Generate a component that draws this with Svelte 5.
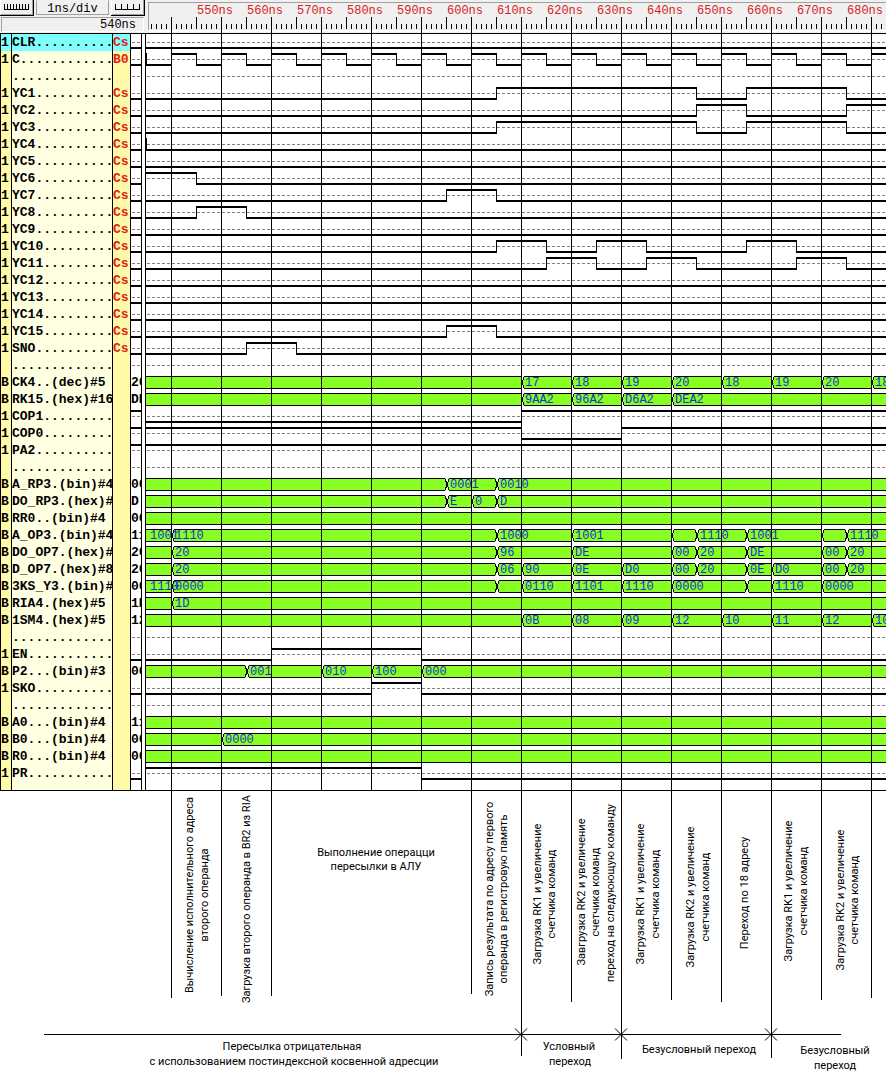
<script>
  const ROW = 17;
  const END = 4000;
  const START = 146;

  const bit = (name, type, first, edges = [], side = 0) => ({ kind: 'bit', name, type, first, edges, side });
  const bus = (name, side, cells = []) => ({ kind: 'bus', name, side, cells });
  const gap = () => ({ kind: 'gap', name: '' });

  const clock = Array.from({ length: 154 }, (_, i) => 171 + i * 25);

  const rows = [
    bit('CLR', 'Cs', 0),
    bit('C', 'B0', 0, clock),
    gap(),
    bit('YC1', 'Cs', 0, [496, 696, 746, 846]),
    bit('YC2', 'Cs', 0, [696, 746, 846]),
    bit('YC3', 'Cs', 0, [496, 696, 746, 846]),
    bit('YC4', 'Cs', 0),
    bit('YC5', 'Cs', 0),
    bit('YC6', 'Cs', 1, [196]),
    bit('YC7', 'Cs', 0, [446, 496]),
    bit('YC8', 'Cs', 0, [196, 246]),
    bit('YC9', 'Cs', 0),
    bit('YC10', 'Cs', 0, [496, 546, 596, 646, 746, 796]),
    bit('YC11', 'Cs', 0, [546, 596, 646, 696, 796, 846]),
    bit('YC12', 'Cs', 0),
    bit('YC13', 'Cs', 0),
    bit('YC14', 'Cs', 0),
    bit('YC15', 'Cs', 0, [446, 496]),
    bit('SNO', 'Cs', 0, [246, 296]),
    gap(),
    bus('CK4..(dec)#5', '20', [[521, '17'], [571, '18'], [621, '19'], [671, '20'], [721, '18'], [771, '19'], [821, '20'], [871, '18']]),
    bus('RK15.(hex)#16', 'DE', [[521, '9AA2'], [571, '96A2'], [621, 'D6A2'], [671, 'DEA2']]),
    bit('COP1', '', 0, [521], 1),
    bit('COP0', '', 1, [521, 621], 1),
    bit('PA2', '', 1, [], 1),
    gap(),
    bus('A_RP3.(bin)#4', '00', [[446, '0001'], [496, '0010']]),
    bus('DO_RP3.(hex)#', 'D', [[446, 'E'], [471, '0'], [496, 'D']]),
    bus('RR0..(bin)#4', '00'),
    bus('A_OP3.(bin)#4', '11', [[146, '1001'], [171, '1110'], [496, '1000'], [571, '1001'], [671, ''], [696, '1110'], [746, '1001'], [821, ''], [846, '1110']]),
    bus('DO_OP7.(hex)#', '20', [[171, '20'], [496, '96'], [571, 'DE'], [671, '00'], [696, '20'], [746, 'DE'], [821, '00'], [846, '20']]),
    bus('D_OP7.(hex)#8', '20', [[171, '20'], [496, '06'], [521, '90'], [571, '0E'], [621, 'D0'], [671, '00'], [696, '20'], [746, '0E'], [771, 'D0'], [821, '00'], [846, '20']]),
    bus('3KS_Y3.(bin)#', '00', [[146, '1110'], [171, '0000'], [496, ''], [521, '0110'], [571, '1101'], [621, '1110'], [671, '0000'], [746, ''], [771, '1110'], [821, '0000']]),
    bus('RIA4.(hex)#5', '1D', [[171, '1D']]),
    bus('1SM4.(hex)#5', '12', [[521, '0B'], [571, '08'], [621, '09'], [671, '12'], [721, '10'], [771, '11'], [821, '12'], [871, '10']]),
    gap(),
    bit('EN', '', 0, [271, 421]),
    bus('P2...(bin)#3', '00', [[246, '001'], [321, '010'], [371, '100'], [421, '000']]),
    bit('SKO', '', 0, [371, 421]),
    gap(),
    bus('A0...(bin)#4', '11'),
    bus('B0...(bin)#4', '00', [[221, '0000']]),
    bus('R0...(bin)#4', '00'),
    bit('PR', '', 1, [421])
  ];

  const label = (row) => (row.kind === 'bus' ? row.name : row.name.padEnd(13, '.'));

  // Horizontal runs of a one-bit signal: [from, to, level]
  function runs(row) {
    const xs = [START, ...row.edges, END];
    return xs.slice(1).map((x, i) => [xs[i], x + 1, (row.first + i) % 2]);
  }

  const grid = Array.from({ length: 77 }, (_, i) => 171 + i * 50);
  const minor = Array.from({ length: 700 }, (_, i) => 151 + i * 5);
  const times = Array.from({ length: 14 }, (_, i) => ({ x: 197 + i * 50, t: 550 + i * 10 }));

  const drops = [[171, 208], [221, 206], [271, 206], [471, 204], [521, 266], [571, 212], [621, 269], [671, 210], [721, 212], [771, 268], [821, 210], [871, 208]];
  const marks = [521, 621, 771];

  const vertical = [
    [193, 105, 'Вычисление исполнительного адреса'],
    [208, 105, 'второго операнда'],
    [250, 109, 'Загрузка второго операнда в BR2 из RIA'],
    [493, 109, 'Запись результата по адресу первого'],
    [507, 109, 'операнда в регистровую память'],
    [541, 104, 'Загрузка RK1 и увеличение'],
    [555, 104, 'счетчика команд'],
    [585, 102, 'Завгрузка RK2 и увеличение'],
    [599, 102, 'счетчика команд'],
    [614, 103, 'переход на следуюющую команду'],
    [644, 104, 'Загрузка RK1 и увеличение'],
    [659, 104, 'счетчика команд'],
    [694, 107, 'Загрузка RK2 и увеличение'],
    [709, 107, 'счетчика команд'],
    [748, 103, 'Переход по 18 адресу'],
    [792, 101, 'Загрузка RK1 и увеличение'],
    [807, 101, 'счетчика команд'],
    [844, 110, 'Загрузка RK2 и увеличение'],
    [858, 110, 'счетчика команд']
  ];

  const horizontal = [
    [376, 66, 'Выполнение операцци'],
    [376, 80, 'пересылки в АЛУ'],
    [292, 260, 'Пересылка отрицательная'],
    [294, 275, 'с использованием постиндексной косвенной адресции'],
    [569, 260, 'Условный'],
    [570, 275, 'переход'],
    [699, 263, 'Безусловный переход'],
    [835, 264, 'Безусловный'],
    [835, 279, 'переход']
  ];
</script>

<main>
  <header>
    <div class="controls">
      <div class="scale">
        <button aria-label="Finer scale">
          <svg width="27" height="8"><path d="M0 5h25v1H0zM0 0h1v6H0zM3 0h1v6H3zM6 0h1v6H6zM9 0h1v6H9zM12 0h1v6h-1zM15 0h1v6h-1zM18 0h1v6h-1zM21 0h1v6h-1zM24 0h1v6h-1z" /></svg>
        </button>
        <output>1ns/div</output>
        <button aria-label="Coarser scale">
          <svg width="27" height="8"><path d="M0 5h25v1H0zM0 0h1v6H0zM6 0h1v6H6zM12 0h1v6h-1zM18 0h1v6h-1zM24 0h1v6h-1z" /></svg>
        </button>
      </div>
      <output class="cursor">540ns</output>
    </div>
    <svg class="ruler" height="33">
      <g transform="translate(-146 0)">
        <rect class="edge" x="148" y="2" width="4000" height="1" />
        <rect class="edge" x="148" y="2" width="1" height="29" />
        <rect class="light" x="148" y="30" width="4000" height="2" />
        {#each minor as x}
          <rect {x} y="24" width="1" height="5" />
        {/each}
        {#each grid as x}
          <rect {x} y="17" width="1" height="16" />
          <rect x={x + 25} y="17" width="1" height="12" />
        {/each}
        {#each times as { x, t }}
          <text {x} y="14">{t}ns</text>
        {/each}
      </g>
    </svg>
  </header>

  <section class="body">
    <div class="names">
      {#each rows as row, i}
        <div class="row" class:active={i === 0}>
          <span class="kind">{row.kind === 'bit' ? '1' : row.kind === 'bus' ? 'B' : ''}</span>
          <span class="name">{label(row)}</span>
          <span class="type">{row.type ?? ''}</span>
          <span class="side">
            {#if row.kind === 'bus'}
              {row.side}
            {:else}
              <svg width="10" height="17">
                <path class="dash" d="M1 8.500h9" />
                {#if row.kind === 'bit'}
                  <rect y={row.side ? 2 : 13} width="10" height="2" />
                {/if}
              </svg>
            {/if}
          </span>
          <span class="split"></span>
        </div>
      {/each}
      <div class="row rest">
        <span class="kind"></span><span class="name"></span><span class="type"></span><span class="side"></span><span class="split"></span>
      </div>
    </div>

    <svg class="waves" height={rows.length * ROW + 8}>
      <g transform="translate(-146 0)">
        {#each rows as row, i}
          <g transform="translate(0 {i * ROW})">
            {#if row.kind === 'bus'}
              <rect class="bus" x="146" y="2" width="4000" height="13" />
              <rect x="146" y="2" width="4000" height="1" />
              <rect x="146" y="14" width="4000" height="1" />
            {:else}
              <path class="dash" d="M147 8.500H4000" />
            {/if}
            {#if row.kind === 'bit'}
              {#each runs(row) as [from, to, level]}
                <rect x={from} y={level ? 2 : 13} width={to - from} height="2" />
              {/each}
              {#each row.edges as x}
                <rect {x} y="2" width="1" height="13" />
              {/each}
              {#if row.name === 'C' || row.name === 'YC4'}
                <rect x="146" y="2" width="1" height="13" />
              {/if}
            {/if}
          </g>
        {/each}
        {#each grid as x}
          <rect {x} y="0" width="1" height="756" />
        {/each}
        {#each rows as row, i}
          {#if row.kind === 'bus'}
            <g transform="translate(0 {i * ROW})">
              {#each row.cells as [x, value]}
                {#if x > START}
                  <g transform="translate({x} 0)">
                    <path class="notch" d="M{(x - 171) % 50 ? -1 : 1} 2H3L2 8H1zM{(x - 171) % 50 ? -1 : 1} 15H3L2 9H1z" />
                    {#if (x - 171) % 50}
                      <path d="M-1 3h1v3h-1zM0 5h1v7H0zM-1 11h1v3h-1z" />
                    {/if}
                    <path d="M2 3h1v3H2zM1 6h1v5H1zM2 11h1v3H2z" />
                  </g>
                {/if}
                <text x={x + 4} y="12">{value}</text>
              {/each}
            </g>
          {/if}
        {/each}
      </g>
    </svg>
  </section>

  <svg class="notes" height="299">
    {#each drops as [x, h]}
      <rect {x} y="0" width="1" height={h - 1} />
    {/each}
    <rect x="44" y="243" width="797" height="1" />
    {#each marks as x}
      <path class="cross" d="M{x - 6} 237.500l12 12m0 -12l-12 12" />
    {/each}
    {#each vertical as [x, y, text]}
      <text transform="translate({x} {y - 1}) rotate(-90)">{text}</text>
    {/each}
    {#each horizontal as [x, y, text]}
      <text {x} y={y - 1}>{text}</text>
    {/each}
  </svg>
</main>

<style>
  :global(body) {
    margin: 0;
    background: #fff;
  }

  main {
    overflow: hidden;
    color: #000;
    font-family: 'Liberation Mono', monospace;
    font-size: 13px;
  }

  svg {
    display: block;
  }

  header,
  .body {
    display: grid;
    grid-template-columns: 146px minmax(0, 1fr);
    border-bottom: 1px solid #000;
  }

  header {
    background: #f0f0f0;
  }

  .controls {
    display: flex;
    flex-direction: column;
    gap: 1px;
    height: 33px;
  }

  .scale {
    display: flex;
    gap: 2px;
    height: 16px;
    padding-right: 1px;
  }

  button {
    display: flex;
    align-items: flex-start;
    box-sizing: border-box;
    width: 34px;
    height: 16px;
    padding: 4px 0 0 4px;
    border: solid #000;
    border-width: 0 1px 1px 0;
    box-shadow: inset 1px 0 #fff, inset -1px -1px #a0a0a0;
    background: #f0f0f0;
  }

  output {
    box-sizing: border-box;
    border: 1px solid #a0a0a0;
    border-color: #a0a0a0 #fff #fff #a0a0a0;
    font-size: 12px;
    line-height: 15px;
  }

  .scale output {
    flex: 1;
    height: 15px;
    border-color: #f0f0f0 #a0a0a0 #a0a0a0;
    text-align: center;
    line-height: 16px;
  }

  .cursor {
    height: 15px;
    margin: 0 2px 0 1px;
    padding-right: 7px;
    text-align: right;
  }

  .ruler,
  .waves,
  .notes {
    width: 100%;
    overflow: hidden;
  }

  .ruler text {
    fill: #d82020;
    font-size: 12px;
  }

  .edge {
    fill: #a0a0a0;
  }

  .light {
    fill: #fff;
  }

  .row {
    box-sizing: border-box;
    display: grid;
    grid-template-columns: 10px 100px 17px 10px 3px;
    column-gap: 1px;
    height: 17px;
    padding: 0 1px;
    background: #000;
    font-weight: bold;
    line-height: 17px;
    white-space: pre;
  }

  .rest {
    height: 8px;
  }

  .row span {
    min-width: 0;
    overflow: hidden;
  }

  .kind,
  .type {
    background: #fffaa8;
  }

  .name {
    background: #ffffe1;
  }

  .active .kind,
  .active .name,
  .active .type {
    background: #80ffff;
  }

  .type {
    color: #e02010;
  }

  .side,
  .split {
    background: #fff;
  }

  .dash {
    fill: none;
    stroke: #808080;
    stroke-dasharray: 3 2;
  }

  .bus {
    fill: #88ff22;
  }

  .notch {
    fill: #fff;
  }

  .waves text {
    fill: #1830d8;
    font-size: 12px;
  }

  .notes text {
    font-family: Roboto, sans-serif;
    font-size: 11px;
    text-anchor: middle;
  }

  .cross {
    fill: none;
    stroke: #000;
  }
</style>
